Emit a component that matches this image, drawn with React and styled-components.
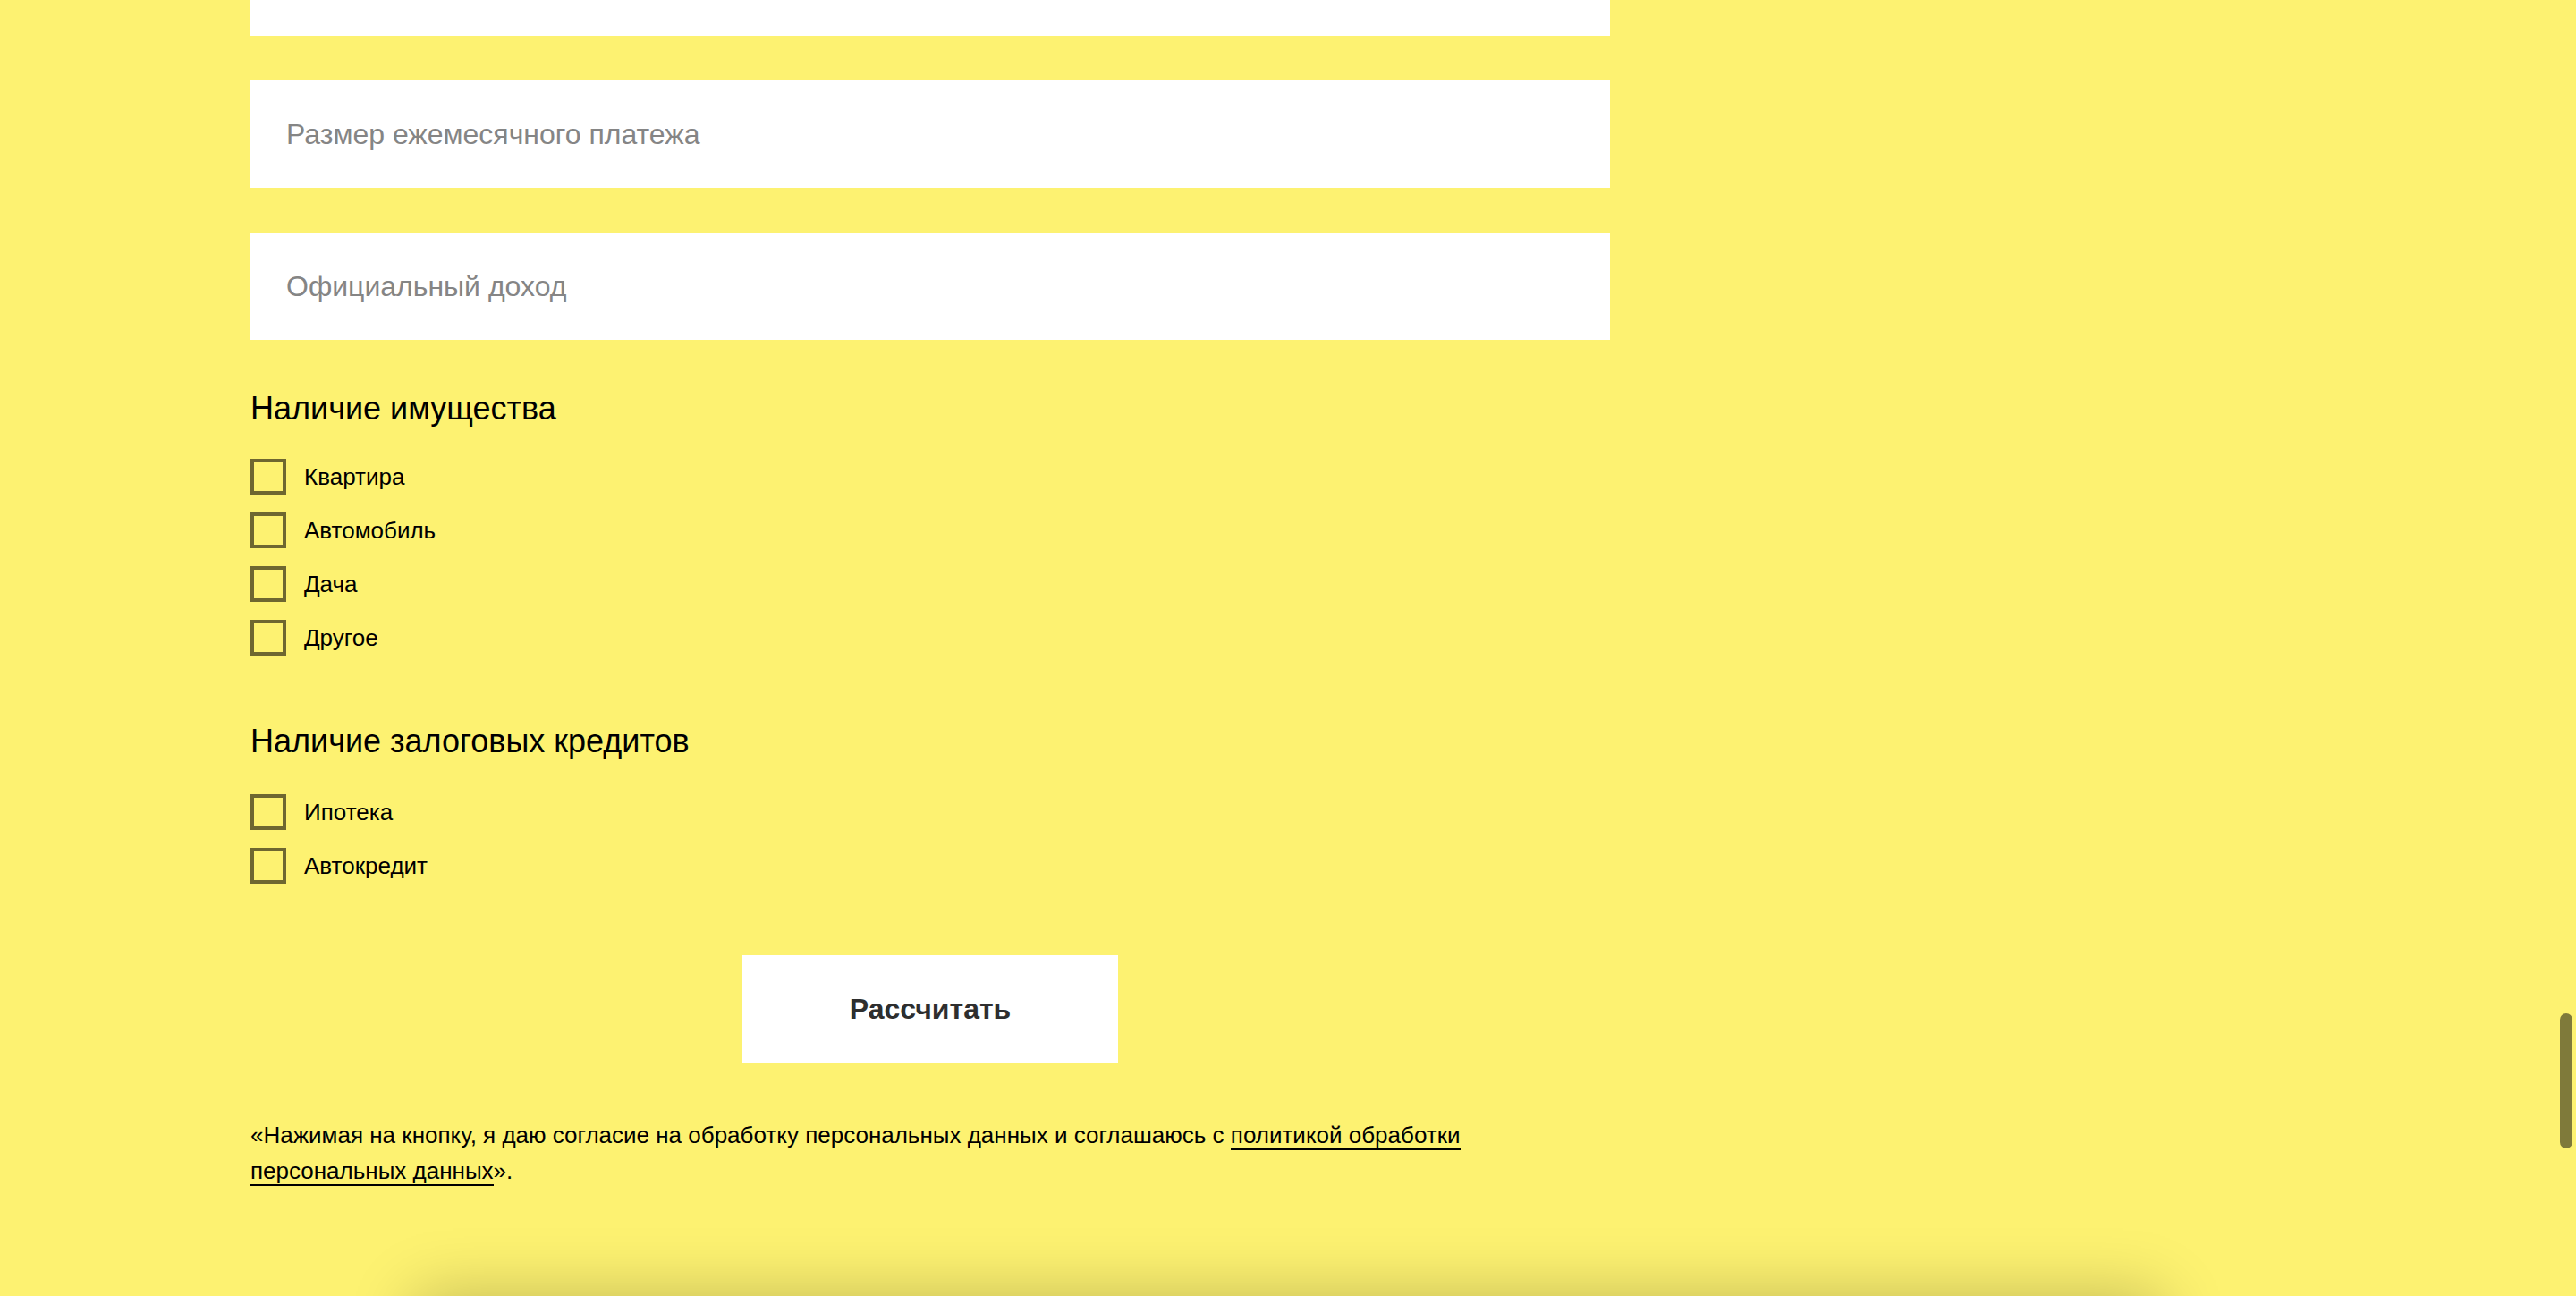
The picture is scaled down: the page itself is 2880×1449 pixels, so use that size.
import React from "react";
import styled, { createGlobalStyle } from "styled-components";

const GlobalStyle = createGlobalStyle`
  html, body {
    margin: 0;
    padding: 0;
    background: #fdf271;
    font-family: "Liberation Sans", Arial, sans-serif;
    overflow: hidden;
  }
  * {
    box-sizing: border-box;
  }
`;

const propertyItems = ["Квартира", "Автомобиль", "Дача", "Другое"];
const creditItems = ["Ипотека", "Автокредит"];

const App = () => {
  //credit form, scrolled to the bottom
  return (
    <>
      <GlobalStyle />
      <Page>
        <Form onSubmit={(e) => e.preventDefault()}>
          <Field type="text" placeholder="Сумма кредита" />
          <Field type="text" placeholder="Размер ежемесячного платежа" />
          <Field type="text" placeholder="Официальный доход" />

          <Section $top="6px" $inner="35px">
            <SectionTitle>Наличие имущества</SectionTitle>
            <CheckList>
              {propertyItems.map((item) => (
                <CheckRow key={item}>
                  <CheckBox type="checkbox" />
                  <CheckText>{item}</CheckText>
                </CheckRow>
              ))}
            </CheckList>
          </Section>

          <Section $top="25px" $inner="38px">
            <SectionTitle>Наличие залоговых кредитов</SectionTitle>
            <CheckList>
              {creditItems.map((item) => (
                <CheckRow key={item}>
                  <CheckBox type="checkbox" />
                  <CheckText>{item}</CheckText>
                </CheckRow>
              ))}
            </CheckList>
          </Section>

          <ButtonRow>
            <SubmitButton type="submit">Рассчитать</SubmitButton>
          </ButtonRow>

          <Agreement>
            «Нажимая на кнопку, я даю согласие на обработку персональных данных и
            соглашаюсь с <PolicyLink href="#">политикой обработки персональных данных</PolicyLink>».
          </Agreement>
        </Form>
        <NextCard />
        <ScrollThumb />
      </Page>
    </>
  );
};

export default App;

const Page = styled.div`
  position: relative;
  height: 1449px;
  overflow: hidden;
  background: #fdf271;
`;

const Form = styled.form`
  width: 1520px;
  margin: -80px 0 0 280px;
  display: flex;
  flex-direction: column;
  gap: 50px;
`;

const Field = styled.input`
  display: block;
  width: 100%;
  height: 120px;
  margin: 0;
  padding: 0 40px;
  border: none;
  outline: none;
  background: #fff;
  font-family: "Liberation Sans", Arial, sans-serif;
  font-size: 32px;
  color: #222;
  &::placeholder {
    color: #858585;
  }
`;

const Section = styled.div`
  display: flex;
  flex-direction: column;
  gap: ${(p) => p.$inner || "36px"};
  margin-top: ${(p) => p.$top || "0"};
`;

const SectionTitle = styled.h3`
  margin: 0;
  font-size: 36px;
  font-weight: 400;
  line-height: 42px;
  color: #000;
`;

const CheckList = styled.div`
  display: flex;
  flex-direction: column;
  gap: 20px;
`;

const CheckRow = styled.label`
  display: flex;
  align-items: center;
  gap: 20px;
  height: 40px;
  cursor: pointer;
`;

const CheckBox = styled.input`
  appearance: none;
  width: 40px;
  height: 40px;
  margin: 0;
  border: 4px solid #6e6730;
  background: transparent;
  flex-shrink: 0;
  cursor: pointer;
  &:checked {
    background: #6e6730;
  }
`;

const CheckText = styled.span`
  font-size: 26px;
  color: #000;
`;

const ButtonRow = styled.div`
  display: flex;
  justify-content: center;
  margin-top: 30px;
`;

const SubmitButton = styled.button`
  width: 420px;
  height: 120px;
  border: none;
  background: #fff;
  font-family: "Liberation Sans", Arial, sans-serif;
  font-size: 32px;
  font-weight: 700;
  color: #2e2e2e;
  cursor: pointer;
`;

const Agreement = styled.p`
  margin: 11px 0 0;
  font-size: 26px;
  line-height: 40px;
  color: #000;
`;

const PolicyLink = styled.a`
  color: #000;
  text-decoration: none;
  border-bottom: 2px solid #000;
`;

const NextCard = styled.div`
  width: 1950px;
  height: 400px;
  margin: 120px auto 0;
  background: #fdf271;
  box-shadow: 0 0 70px rgba(0, 0, 0, 0.24);
`;

const ScrollThumb = styled.div`
  position: absolute;
  top: 1133px;
  right: 4px;
  width: 14px;
  height: 151px;
  border-radius: 7px;
  background: #7f7a3a;
`;
